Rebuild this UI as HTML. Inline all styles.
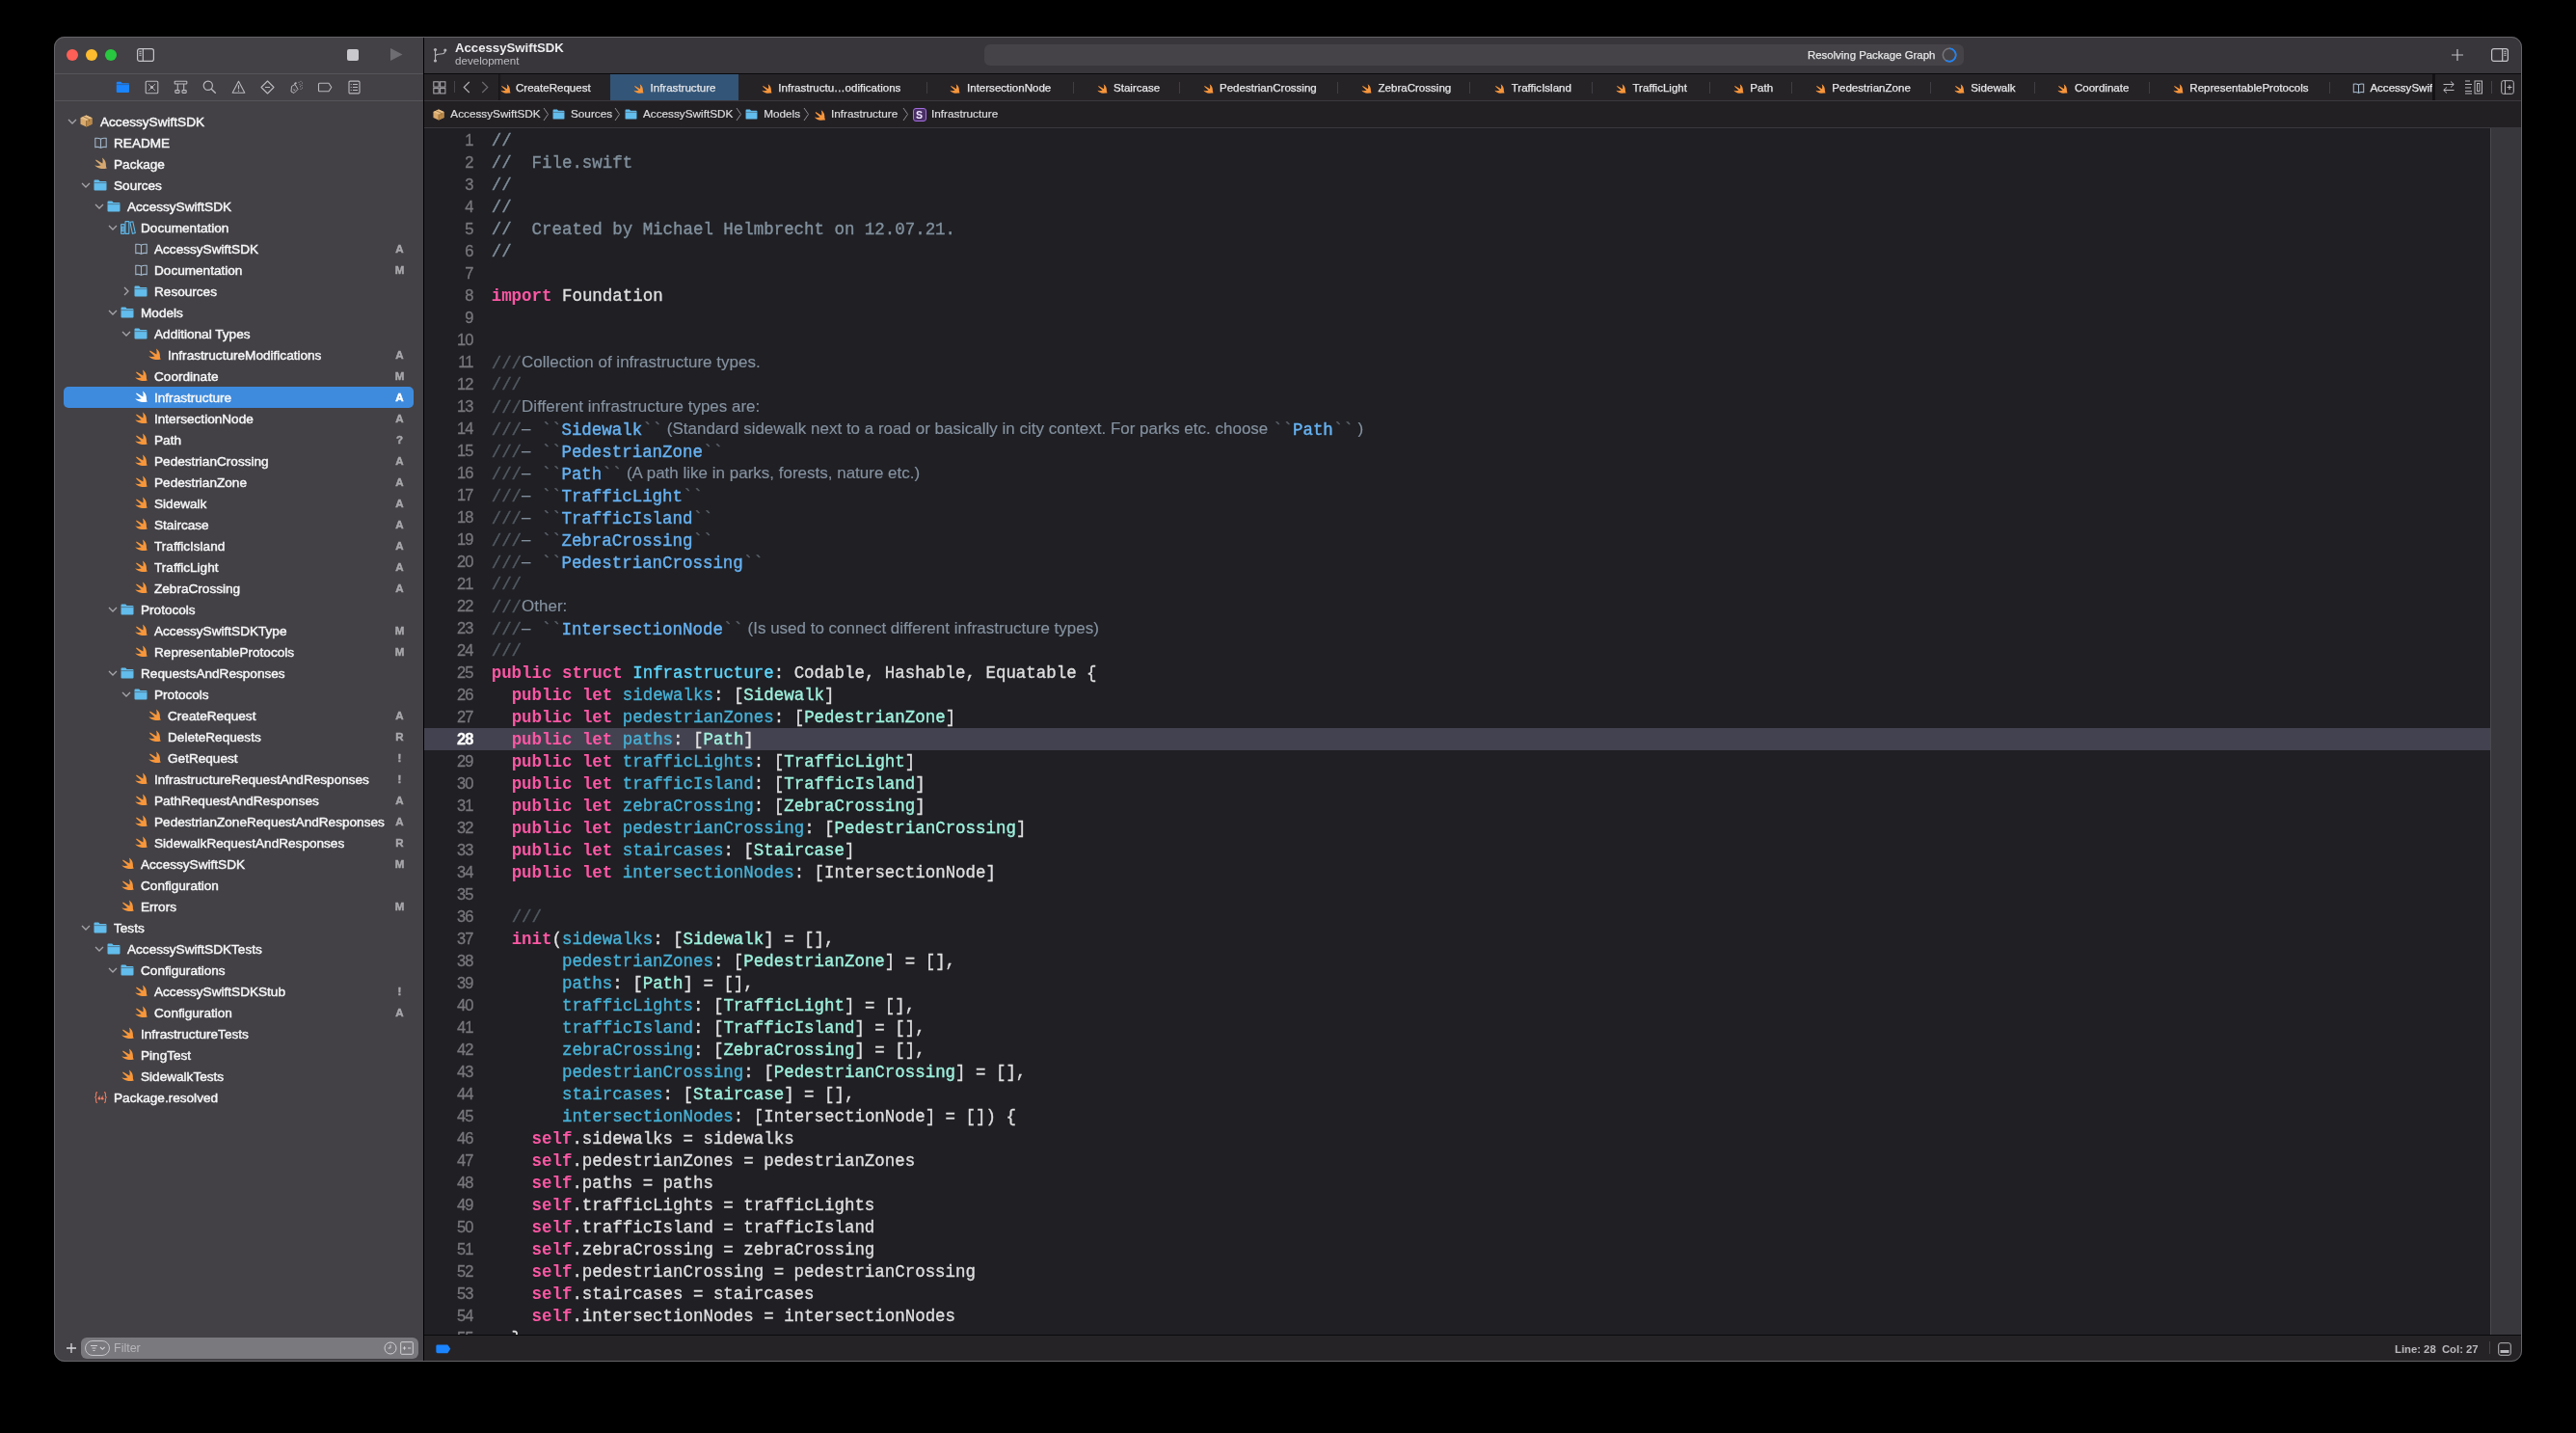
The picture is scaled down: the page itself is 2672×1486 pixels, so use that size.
<!DOCTYPE html>
<html><head><meta charset="utf-8"><style>
*{box-sizing:border-box;margin:0;padding:0}
html,body{width:2672px;height:1486px;overflow:hidden;background:#000}
body{position:relative;font-family:"Liberation Sans",sans-serif}
.a{position:absolute}
#win{position:absolute;left:56px;top:38px;width:2560px;height:1374px;border-radius:11px;overflow:hidden;background:#1f1f24;will-change:transform}
#winb{position:absolute;left:56px;top:38px;width:2560px;height:1374px;border-radius:11px;border:1px solid #656468;pointer-events:none}
#side{position:absolute;left:0;top:0;width:383px;height:1374px;background:#434145}
#sidebd{position:absolute;left:383px;top:0;width:1px;height:1374px;background:#000}
.sep{position:absolute;height:1px}
.row{position:absolute;left:0;width:383px;height:22px;color:#f6f6f8;font-size:13.6px;line-height:22px;white-space:nowrap;-webkit-text-stroke:0.45px}
.row .t{position:absolute;top:0.7px}
.row .bd{position:absolute;left:352.5px;top:0;width:12px;text-align:center;color:#a9a8ac;font-size:11.5px;font-weight:bold}
.row .ic{position:absolute;top:4px}
.row .ch{position:absolute;top:5px}
#code{position:absolute;left:0;top:0}
.ln{position:absolute;left:0px;width:50.5px;margin-top:-1px;text-align:right;font-family:"Liberation Sans",sans-serif;font-size:16.5px;letter-spacing:-0.9px;padding-right:0;color:#77777c;-webkit-text-stroke:0.3px;height:23px;line-height:23px}
.cl{position:absolute;left:69.7px;height:23px;line-height:23px;font-family:"Liberation Mono",monospace;font-size:17.455px;color:#dfdfe0;white-space:pre;-webkit-text-stroke:0.35px}
.lnc{color:#ffffff;font-weight:bold}
.k{color:#fc57a4;font-weight:bold;-webkit-text-stroke:0}
.dt{color:#5dd8ff}
.do{color:#46b1d6}
.pt{color:#9ef1dd}
.cm{color:#81909d}
.ds{color:#525a62}
.dx{font-family:"Liberation Sans",sans-serif;font-size:16.95px;color:#8592a0;-webkit-text-stroke:0.15px;position:relative;top:-1px;letter-spacing:0.025px}
.dc{color:#66b2f2;-webkit-text-stroke:0.4px}
.bt{color:#5a6168}
.tab{position:absolute;top:38px;height:28px;font-size:11.8px;line-height:28px;color:#dcdcde;white-space:nowrap}
.bc{position:absolute;top:66.3px;height:27px;font-size:11.75px;line-height:27px;color:#dcdcde;white-space:nowrap;-webkit-text-stroke:0.2px}
</style></head>
<body><div id="win"><div id="side"><div class="a" style="left:13px;top:12.5px;width:12px;height:12px;border-radius:50%;background:#fe5f57"></div><div class="a" style="left:33px;top:12.5px;width:12px;height:12px;border-radius:50%;background:#febc2e"></div><div class="a" style="left:53px;top:12.5px;width:12px;height:12px;border-radius:50%;background:#28c840"></div><svg class="a" style="left:85px;top:11px" width="20" height="16" viewBox="0 0 20 16"><rect x="1.6" y="1.6" width="16.8" height="12.8" rx="2.2" fill="none" stroke="#c4c3c7" stroke-width="1.2"/><line x1="7.3" y1="1.6" x2="7.3" y2="14.4" stroke="#c4c3c7" stroke-width="1.2"/><path d="M3.4 4.3H5.6M3.4 6.3H5.6M3.4 8.3H5.6" stroke="#c4c3c7" stroke-width="1"/></svg><div class="a" style="left:304px;top:13px;width:12px;height:12px;border-radius:2px;background:#c9c8cc"></div><svg class="a" style="left:348px;top:11px" width="14" height="15" viewBox="0 0 14 15"><path d="M1 1L13.5 7.5L1 14Z" fill="#6e6d71"/></svg></div><div class="sep a" style="left:0;top:38px;width:383px;background:#56555a"></div><div class="sep a" style="left:0;top:66px;width:383px;background:#56555a"></div><div id="sidebd"></div><div class="a" style="left:0;top:0"><svg class="a" style="left:64px;top:46px" width="15" height="13" viewBox="0 0 15 13"><path fill="#1a84ff" d="M1.8 0.8H5.3L6.8 2.2H13Q14 2.2 14 3.2V11Q14 12 13 12H1.8Q0.8 12 0.8 11V1.8Q0.8 0.8 1.8 0.8Z"/><rect x="0.8" y="3.3" width="13.2" height="0.8" fill="#434145" opacity="0.6"/></svg><svg class="a" style="left:94px;top:45px" width="15" height="15" viewBox="0 0 15 15"><rect x="1.2" y="1.2" width="12.6" height="12.6" rx="1" fill="none" stroke="#b9b8bc" stroke-width="1.1"/><path d="M4 4L11 11M11 4L4 11" stroke="#b9b8bc" stroke-width="0.8"/><circle cx="7.5" cy="7.5" r="1.5" fill="#b9b8bc"/></svg><svg class="a" style="left:124px;top:45px" width="15" height="15" viewBox="0 0 15 15"><rect x="1.2" y="1.2" width="12.6" height="2.8" rx=".6" fill="none" stroke="#b9b8bc" stroke-width="1.1"/><path d="M4.3 4V10.5M10.7 4V10.5" stroke="#b9b8bc" stroke-width="1.1"/><rect x="1.8" y="10.6" width="4.2" height="2.8" rx=".6" fill="none" stroke="#b9b8bc" stroke-width="1.1"/><rect x="9" y="10.6" width="4.2" height="2.8" rx=".6" fill="none" stroke="#b9b8bc" stroke-width="1.1"/></svg><svg class="a" style="left:154px;top:45px" width="15" height="15" viewBox="0 0 15 15"><circle cx="5.8" cy="5.8" r="4.6" fill="none" stroke="#b9b8bc" stroke-width="1.2"/><path d="M9.2 9.2L13.3 13.3" stroke="#b9b8bc" stroke-width="1.4" stroke-linecap="round"/></svg><svg class="a" style="left:184px;top:45px" width="15" height="15" viewBox="0 0 15 15"><path d="M7.5 1.3L13.8 13.2H1.2Z" fill="none" stroke="#b9b8bc" stroke-width="1.1" stroke-linejoin="round"/><path d="M7.5 5.3V9.6" stroke="#b9b8bc" stroke-width="1.2"/><circle cx="7.5" cy="11.3" r=".7" fill="#b9b8bc"/></svg><svg class="a" style="left:214px;top:45px" width="15" height="15" viewBox="0 0 15 15"><path d="M7.5 1L14 7.5L7.5 14L1 7.5Z" fill="none" stroke="#b9b8bc" stroke-width="1.1" stroke-linejoin="round"/><path d="M5 7.5H10" stroke="#b9b8bc" stroke-width="1.2"/></svg><svg class="a" style="left:244px;top:45px" width="16" height="15" viewBox="0 0 16 15"><path d="M2.5 6.5L6 4.5L9 9.5L5 13.5L2 12Z" fill="none" stroke="#b9b8bc" stroke-width="1"/><path d="M5.5 4L7.5 2.8" stroke="#b9b8bc" stroke-width="1.6"/><path d="M4.5 9.5L6 11M6 9.5L4.5 11" stroke="#b9b8bc" stroke-width=".7"/><circle cx="10" cy="2.2" r=".5" fill="#b9b8bc"/><circle cx="12" cy="1.3" r=".5" fill="#b9b8bc"/><circle cx="13.5" cy="3" r=".5" fill="#b9b8bc"/><circle cx="11" cy="4.2" r=".5" fill="#b9b8bc"/><circle cx="13" cy="5.5" r=".5" fill="#b9b8bc"/><circle cx="11.5" cy="6.8" r=".5" fill="#b9b8bc"/><circle cx="13.5" cy="8" r=".5" fill="#b9b8bc"/><circle cx="12" cy="9.3" r=".5" fill="#b9b8bc"/></svg><svg class="a" style="left:273px;top:45px" width="16" height="15" viewBox="0 0 16 15"><path d="M1.5 4.3Q1.5 3.3 2.5 3.3H12L14.8 7.5L12 11.7H2.5Q1.5 11.7 1.5 10.7Z" fill="none" stroke="#b9b8bc" stroke-width="1.1" stroke-linejoin="round"/></svg><svg class="a" style="left:305px;top:45px" width="13" height="15" viewBox="0 0 13 15"><rect x="1" y="1.1" width="11" height="12.8" rx="1.2" fill="none" stroke="#b9b8bc" stroke-width="1.1"/><path d="M5 4.5H10M5 7.5H10M5 10.5H10" stroke="#b9b8bc" stroke-width="1"/><circle cx="3.2" cy="4.5" r=".6" fill="#b9b8bc"/><circle cx="3.2" cy="7.5" r=".6" fill="#b9b8bc"/><circle cx="3.2" cy="10.5" r=".6" fill="#b9b8bc"/></svg></div><div class="row" style="top:77px"><svg class="a" style="left:13.600000000000001px;top:5.4px" width="10" height="12" viewBox="0 0 10 12"><path fill="none" stroke="#a5a4a8" stroke-width="1.3" d="M1 4L5 8L9 4"/></svg><svg class="a" style="left:27px;top:4px" width="13" height="13" viewBox="0 0 13 13"><path fill="#d9aa6c" d="M6.5 0.5L12.5 3.2V9.8L6.5 12.5L0.5 9.8V3.2Z"/><path fill="#b98848" d="M6.5 6L12.5 3.2V9.8L6.5 12.5Z"/><path fill="#e8c08a" d="M6.5 0.5L12.5 3.2L6.5 6L0.5 3.2Z"/><path stroke="#8d6634" stroke-width="0.8" fill="none" d="M3.5 1.9L9.5 4.6V7M6.5 6V12.5"/></svg><span class="t" style="left:48px">AccessySwiftSDK</span></div><div class="row" style="top:99px"><svg class="a" style="left:42px;top:5px" width="13" height="12" viewBox="0 0 13 12"><path fill="none" stroke="#9fb4c8" stroke-width="1.1" d="M6.5 2.2C5 1.2 2.8 1 0.8 1.4V10.6C2.8 10.2 5 10.4 6.5 11.4C8 10.4 10.2 10.2 12.2 10.6V1.4C10.2 1 8 1.2 6.5 2.2ZM6.5 2.2V11.4"/></svg><span class="t" style="left:62px">README</span></div><div class="row" style="top:121px"><svg class="a" style="left:41.8px;top:4.4px" width="13" height="12.5" viewBox="0 0 13.5 12.8"><path fill="#d5a870" d="M8.2 0.3C10.5 1.8 12.2 4.2 12.3 7.2C12.4 8.5 12.3 9.6 12.6 10.5L13.3 11.8C12.5 11.9 11.8 12.2 11 12.3L7.5 12.4C4.5 12.3 2 10.8 0.2 8.6C2 9.3 4.5 9.4 6.8 8.7L1.2 3.6L1.7 2.4L8.6 6.6C9.2 4.8 9 2.5 8.2 0.3Z"/></svg><span class="t" style="left:62px">Package</span></div><div class="row" style="top:143px"><svg class="a" style="left:27.6px;top:5.4px" width="10" height="12" viewBox="0 0 10 12"><path fill="none" stroke="#a5a4a8" stroke-width="1.3" d="M1 4L5 8L9 4"/></svg><svg class="a" style="left:41px;top:5px" width="14" height="12" viewBox="0 0 14 12"><path fill="#62bcec" d="M1.5 0.5H5.2L6.6 2H12.5Q13.5 2 13.5 3V10.5Q13.5 11.5 12.5 11.5H1.5Q0.5 11.5 0.5 10.5V1.5Q0.5 0.5 1.5 0.5Z"/><rect x="0.5" y="3.2" width="13" height="0.9" fill="#434145" opacity="0.55"/></svg><span class="t" style="left:62px">Sources</span></div><div class="row" style="top:165px"><svg class="a" style="left:41.6px;top:5.4px" width="10" height="12" viewBox="0 0 10 12"><path fill="none" stroke="#a5a4a8" stroke-width="1.3" d="M1 4L5 8L9 4"/></svg><svg class="a" style="left:55px;top:5px" width="14" height="12" viewBox="0 0 14 12"><path fill="#62bcec" d="M1.5 0.5H5.2L6.6 2H12.5Q13.5 2 13.5 3V10.5Q13.5 11.5 12.5 11.5H1.5Q0.5 11.5 0.5 10.5V1.5Q0.5 0.5 1.5 0.5Z"/><rect x="0.5" y="3.2" width="13" height="0.9" fill="#434145" opacity="0.55"/></svg><span class="t" style="left:76px">AccessySwiftSDK</span></div><div class="row" style="top:187px"><svg class="a" style="left:55.6px;top:5.4px" width="10" height="12" viewBox="0 0 10 12"><path fill="none" stroke="#a5a4a8" stroke-width="1.3" d="M1 4L5 8L9 4"/></svg><svg class="a" style="left:68.7px;top:4.2px" width="16" height="14" viewBox="0 0 16 14"><g fill="none" stroke="#5fb6e6" stroke-width="1.1"><rect x="0.6" y="3.6" width="3.6" height="9.8" rx="0.4"/><rect x="1.7" y="6.2" width="1.4" height="4.5"/><rect x="5" y="0.6" width="3.8" height="12.8" rx="0.4"/><path d="M9.9 1.4L12.8 0.8L15.3 12.6L12.4 13.3Z"/></g></svg><span class="t" style="left:90px">Documentation</span></div><div class="row" style="top:209px"><svg class="a" style="left:84px;top:5px" width="13" height="12" viewBox="0 0 13 12"><path fill="none" stroke="#9fb4c8" stroke-width="1.1" d="M6.5 2.2C5 1.2 2.8 1 0.8 1.4V10.6C2.8 10.2 5 10.4 6.5 11.4C8 10.4 10.2 10.2 12.2 10.6V1.4C10.2 1 8 1.2 6.5 2.2ZM6.5 2.2V11.4"/></svg><span class="t" style="left:104px">AccessySwiftSDK</span><span class="bd">A</span></div><div class="row" style="top:231px"><svg class="a" style="left:84px;top:5px" width="13" height="12" viewBox="0 0 13 12"><path fill="none" stroke="#9fb4c8" stroke-width="1.1" d="M6.5 2.2C5 1.2 2.8 1 0.8 1.4V10.6C2.8 10.2 5 10.4 6.5 11.4C8 10.4 10.2 10.2 12.2 10.6V1.4C10.2 1 8 1.2 6.5 2.2ZM6.5 2.2V11.4"/></svg><span class="t" style="left:104px">Documentation</span><span class="bd">M</span></div><div class="row" style="top:253px"><svg class="a" style="left:69.6px;top:5.4px" width="10" height="12" viewBox="0 0 10 12"><path fill="none" stroke="#a5a4a8" stroke-width="1.3" d="M3 2L7 6L3 10"/></svg><svg class="a" style="left:83px;top:5px" width="14" height="12" viewBox="0 0 14 12"><path fill="#62bcec" d="M1.5 0.5H5.2L6.6 2H12.5Q13.5 2 13.5 3V10.5Q13.5 11.5 12.5 11.5H1.5Q0.5 11.5 0.5 10.5V1.5Q0.5 0.5 1.5 0.5Z"/><rect x="0.5" y="3.2" width="13" height="0.9" fill="#434145" opacity="0.55"/></svg><span class="t" style="left:104px">Resources</span></div><div class="row" style="top:275px"><svg class="a" style="left:55.6px;top:5.4px" width="10" height="12" viewBox="0 0 10 12"><path fill="none" stroke="#a5a4a8" stroke-width="1.3" d="M1 4L5 8L9 4"/></svg><svg class="a" style="left:69px;top:5px" width="14" height="12" viewBox="0 0 14 12"><path fill="#62bcec" d="M1.5 0.5H5.2L6.6 2H12.5Q13.5 2 13.5 3V10.5Q13.5 11.5 12.5 11.5H1.5Q0.5 11.5 0.5 10.5V1.5Q0.5 0.5 1.5 0.5Z"/><rect x="0.5" y="3.2" width="13" height="0.9" fill="#434145" opacity="0.55"/></svg><span class="t" style="left:90px">Models</span></div><div class="row" style="top:297px"><svg class="a" style="left:69.6px;top:5.4px" width="10" height="12" viewBox="0 0 10 12"><path fill="none" stroke="#a5a4a8" stroke-width="1.3" d="M1 4L5 8L9 4"/></svg><svg class="a" style="left:83px;top:5px" width="14" height="12" viewBox="0 0 14 12"><path fill="#62bcec" d="M1.5 0.5H5.2L6.6 2H12.5Q13.5 2 13.5 3V10.5Q13.5 11.5 12.5 11.5H1.5Q0.5 11.5 0.5 10.5V1.5Q0.5 0.5 1.5 0.5Z"/><rect x="0.5" y="3.2" width="13" height="0.9" fill="#434145" opacity="0.55"/></svg><span class="t" style="left:104px">Additional Types</span></div><div class="row" style="top:319px"><svg class="a" style="left:97.8px;top:4.4px" width="13" height="12.5" viewBox="0 0 13.5 12.8"><path fill="#f7963b" d="M8.2 0.3C10.5 1.8 12.2 4.2 12.3 7.2C12.4 8.5 12.3 9.6 12.6 10.5L13.3 11.8C12.5 11.9 11.8 12.2 11 12.3L7.5 12.4C4.5 12.3 2 10.8 0.2 8.6C2 9.3 4.5 9.4 6.8 8.7L1.2 3.6L1.7 2.4L8.6 6.6C9.2 4.8 9 2.5 8.2 0.3Z"/></svg><span class="t" style="left:118px">InfrastructureModifications</span><span class="bd">A</span></div><div class="row" style="top:341px"><svg class="a" style="left:83.8px;top:4.4px" width="13" height="12.5" viewBox="0 0 13.5 12.8"><path fill="#f7963b" d="M8.2 0.3C10.5 1.8 12.2 4.2 12.3 7.2C12.4 8.5 12.3 9.6 12.6 10.5L13.3 11.8C12.5 11.9 11.8 12.2 11 12.3L7.5 12.4C4.5 12.3 2 10.8 0.2 8.6C2 9.3 4.5 9.4 6.8 8.7L1.2 3.6L1.7 2.4L8.6 6.6C9.2 4.8 9 2.5 8.2 0.3Z"/></svg><span class="t" style="left:104px">Coordinate</span><span class="bd">M</span></div><div class="a" style="left:10px;top:363px;width:363px;height:22px;border-radius:5px;background:#3e8bde"></div><div class="row" style="top:363px"><svg class="a" style="left:83.8px;top:4.4px" width="13" height="12.5" viewBox="0 0 13.5 12.8"><path fill="#ffffff" d="M8.2 0.3C10.5 1.8 12.2 4.2 12.3 7.2C12.4 8.5 12.3 9.6 12.6 10.5L13.3 11.8C12.5 11.9 11.8 12.2 11 12.3L7.5 12.4C4.5 12.3 2 10.8 0.2 8.6C2 9.3 4.5 9.4 6.8 8.7L1.2 3.6L1.7 2.4L8.6 6.6C9.2 4.8 9 2.5 8.2 0.3Z"/></svg><span class="t" style="left:104px">Infrastructure</span><span class="bd" style=color:#fff>A</span></div><div class="row" style="top:385px"><svg class="a" style="left:83.8px;top:4.4px" width="13" height="12.5" viewBox="0 0 13.5 12.8"><path fill="#f7963b" d="M8.2 0.3C10.5 1.8 12.2 4.2 12.3 7.2C12.4 8.5 12.3 9.6 12.6 10.5L13.3 11.8C12.5 11.9 11.8 12.2 11 12.3L7.5 12.4C4.5 12.3 2 10.8 0.2 8.6C2 9.3 4.5 9.4 6.8 8.7L1.2 3.6L1.7 2.4L8.6 6.6C9.2 4.8 9 2.5 8.2 0.3Z"/></svg><span class="t" style="left:104px">IntersectionNode</span><span class="bd">A</span></div><div class="row" style="top:407px"><svg class="a" style="left:83.8px;top:4.4px" width="13" height="12.5" viewBox="0 0 13.5 12.8"><path fill="#f7963b" d="M8.2 0.3C10.5 1.8 12.2 4.2 12.3 7.2C12.4 8.5 12.3 9.6 12.6 10.5L13.3 11.8C12.5 11.9 11.8 12.2 11 12.3L7.5 12.4C4.5 12.3 2 10.8 0.2 8.6C2 9.3 4.5 9.4 6.8 8.7L1.2 3.6L1.7 2.4L8.6 6.6C9.2 4.8 9 2.5 8.2 0.3Z"/></svg><span class="t" style="left:104px">Path</span><span class="bd">?</span></div><div class="row" style="top:429px"><svg class="a" style="left:83.8px;top:4.4px" width="13" height="12.5" viewBox="0 0 13.5 12.8"><path fill="#f7963b" d="M8.2 0.3C10.5 1.8 12.2 4.2 12.3 7.2C12.4 8.5 12.3 9.6 12.6 10.5L13.3 11.8C12.5 11.9 11.8 12.2 11 12.3L7.5 12.4C4.5 12.3 2 10.8 0.2 8.6C2 9.3 4.5 9.4 6.8 8.7L1.2 3.6L1.7 2.4L8.6 6.6C9.2 4.8 9 2.5 8.2 0.3Z"/></svg><span class="t" style="left:104px">PedestrianCrossing</span><span class="bd">A</span></div><div class="row" style="top:451px"><svg class="a" style="left:83.8px;top:4.4px" width="13" height="12.5" viewBox="0 0 13.5 12.8"><path fill="#f7963b" d="M8.2 0.3C10.5 1.8 12.2 4.2 12.3 7.2C12.4 8.5 12.3 9.6 12.6 10.5L13.3 11.8C12.5 11.9 11.8 12.2 11 12.3L7.5 12.4C4.5 12.3 2 10.8 0.2 8.6C2 9.3 4.5 9.4 6.8 8.7L1.2 3.6L1.7 2.4L8.6 6.6C9.2 4.8 9 2.5 8.2 0.3Z"/></svg><span class="t" style="left:104px">PedestrianZone</span><span class="bd">A</span></div><div class="row" style="top:473px"><svg class="a" style="left:83.8px;top:4.4px" width="13" height="12.5" viewBox="0 0 13.5 12.8"><path fill="#f7963b" d="M8.2 0.3C10.5 1.8 12.2 4.2 12.3 7.2C12.4 8.5 12.3 9.6 12.6 10.5L13.3 11.8C12.5 11.9 11.8 12.2 11 12.3L7.5 12.4C4.5 12.3 2 10.8 0.2 8.6C2 9.3 4.5 9.4 6.8 8.7L1.2 3.6L1.7 2.4L8.6 6.6C9.2 4.8 9 2.5 8.2 0.3Z"/></svg><span class="t" style="left:104px">Sidewalk</span><span class="bd">A</span></div><div class="row" style="top:495px"><svg class="a" style="left:83.8px;top:4.4px" width="13" height="12.5" viewBox="0 0 13.5 12.8"><path fill="#f7963b" d="M8.2 0.3C10.5 1.8 12.2 4.2 12.3 7.2C12.4 8.5 12.3 9.6 12.6 10.5L13.3 11.8C12.5 11.9 11.8 12.2 11 12.3L7.5 12.4C4.5 12.3 2 10.8 0.2 8.6C2 9.3 4.5 9.4 6.8 8.7L1.2 3.6L1.7 2.4L8.6 6.6C9.2 4.8 9 2.5 8.2 0.3Z"/></svg><span class="t" style="left:104px">Staircase</span><span class="bd">A</span></div><div class="row" style="top:517px"><svg class="a" style="left:83.8px;top:4.4px" width="13" height="12.5" viewBox="0 0 13.5 12.8"><path fill="#f7963b" d="M8.2 0.3C10.5 1.8 12.2 4.2 12.3 7.2C12.4 8.5 12.3 9.6 12.6 10.5L13.3 11.8C12.5 11.9 11.8 12.2 11 12.3L7.5 12.4C4.5 12.3 2 10.8 0.2 8.6C2 9.3 4.5 9.4 6.8 8.7L1.2 3.6L1.7 2.4L8.6 6.6C9.2 4.8 9 2.5 8.2 0.3Z"/></svg><span class="t" style="left:104px">TrafficIsland</span><span class="bd">A</span></div><div class="row" style="top:539px"><svg class="a" style="left:83.8px;top:4.4px" width="13" height="12.5" viewBox="0 0 13.5 12.8"><path fill="#f7963b" d="M8.2 0.3C10.5 1.8 12.2 4.2 12.3 7.2C12.4 8.5 12.3 9.6 12.6 10.5L13.3 11.8C12.5 11.9 11.8 12.2 11 12.3L7.5 12.4C4.5 12.3 2 10.8 0.2 8.6C2 9.3 4.5 9.4 6.8 8.7L1.2 3.6L1.7 2.4L8.6 6.6C9.2 4.8 9 2.5 8.2 0.3Z"/></svg><span class="t" style="left:104px">TrafficLight</span><span class="bd">A</span></div><div class="row" style="top:561px"><svg class="a" style="left:83.8px;top:4.4px" width="13" height="12.5" viewBox="0 0 13.5 12.8"><path fill="#f7963b" d="M8.2 0.3C10.5 1.8 12.2 4.2 12.3 7.2C12.4 8.5 12.3 9.6 12.6 10.5L13.3 11.8C12.5 11.9 11.8 12.2 11 12.3L7.5 12.4C4.5 12.3 2 10.8 0.2 8.6C2 9.3 4.5 9.4 6.8 8.7L1.2 3.6L1.7 2.4L8.6 6.6C9.2 4.8 9 2.5 8.2 0.3Z"/></svg><span class="t" style="left:104px">ZebraCrossing</span><span class="bd">A</span></div><div class="row" style="top:583px"><svg class="a" style="left:55.6px;top:5.4px" width="10" height="12" viewBox="0 0 10 12"><path fill="none" stroke="#a5a4a8" stroke-width="1.3" d="M1 4L5 8L9 4"/></svg><svg class="a" style="left:69px;top:5px" width="14" height="12" viewBox="0 0 14 12"><path fill="#62bcec" d="M1.5 0.5H5.2L6.6 2H12.5Q13.5 2 13.5 3V10.5Q13.5 11.5 12.5 11.5H1.5Q0.5 11.5 0.5 10.5V1.5Q0.5 0.5 1.5 0.5Z"/><rect x="0.5" y="3.2" width="13" height="0.9" fill="#434145" opacity="0.55"/></svg><span class="t" style="left:90px">Protocols</span></div><div class="row" style="top:605px"><svg class="a" style="left:83.8px;top:4.4px" width="13" height="12.5" viewBox="0 0 13.5 12.8"><path fill="#f7963b" d="M8.2 0.3C10.5 1.8 12.2 4.2 12.3 7.2C12.4 8.5 12.3 9.6 12.6 10.5L13.3 11.8C12.5 11.9 11.8 12.2 11 12.3L7.5 12.4C4.5 12.3 2 10.8 0.2 8.6C2 9.3 4.5 9.4 6.8 8.7L1.2 3.6L1.7 2.4L8.6 6.6C9.2 4.8 9 2.5 8.2 0.3Z"/></svg><span class="t" style="left:104px">AccessySwiftSDKType</span><span class="bd">M</span></div><div class="row" style="top:627px"><svg class="a" style="left:83.8px;top:4.4px" width="13" height="12.5" viewBox="0 0 13.5 12.8"><path fill="#f7963b" d="M8.2 0.3C10.5 1.8 12.2 4.2 12.3 7.2C12.4 8.5 12.3 9.6 12.6 10.5L13.3 11.8C12.5 11.9 11.8 12.2 11 12.3L7.5 12.4C4.5 12.3 2 10.8 0.2 8.6C2 9.3 4.5 9.4 6.8 8.7L1.2 3.6L1.7 2.4L8.6 6.6C9.2 4.8 9 2.5 8.2 0.3Z"/></svg><span class="t" style="left:104px">RepresentableProtocols</span><span class="bd">M</span></div><div class="row" style="top:649px"><svg class="a" style="left:55.6px;top:5.4px" width="10" height="12" viewBox="0 0 10 12"><path fill="none" stroke="#a5a4a8" stroke-width="1.3" d="M1 4L5 8L9 4"/></svg><svg class="a" style="left:69px;top:5px" width="14" height="12" viewBox="0 0 14 12"><path fill="#62bcec" d="M1.5 0.5H5.2L6.6 2H12.5Q13.5 2 13.5 3V10.5Q13.5 11.5 12.5 11.5H1.5Q0.5 11.5 0.5 10.5V1.5Q0.5 0.5 1.5 0.5Z"/><rect x="0.5" y="3.2" width="13" height="0.9" fill="#434145" opacity="0.55"/></svg><span class="t" style="left:90px">RequestsAndResponses</span></div><div class="row" style="top:671px"><svg class="a" style="left:69.6px;top:5.4px" width="10" height="12" viewBox="0 0 10 12"><path fill="none" stroke="#a5a4a8" stroke-width="1.3" d="M1 4L5 8L9 4"/></svg><svg class="a" style="left:83px;top:5px" width="14" height="12" viewBox="0 0 14 12"><path fill="#62bcec" d="M1.5 0.5H5.2L6.6 2H12.5Q13.5 2 13.5 3V10.5Q13.5 11.5 12.5 11.5H1.5Q0.5 11.5 0.5 10.5V1.5Q0.5 0.5 1.5 0.5Z"/><rect x="0.5" y="3.2" width="13" height="0.9" fill="#434145" opacity="0.55"/></svg><span class="t" style="left:104px">Protocols</span></div><div class="row" style="top:693px"><svg class="a" style="left:97.8px;top:4.4px" width="13" height="12.5" viewBox="0 0 13.5 12.8"><path fill="#f7963b" d="M8.2 0.3C10.5 1.8 12.2 4.2 12.3 7.2C12.4 8.5 12.3 9.6 12.6 10.5L13.3 11.8C12.5 11.9 11.8 12.2 11 12.3L7.5 12.4C4.5 12.3 2 10.8 0.2 8.6C2 9.3 4.5 9.4 6.8 8.7L1.2 3.6L1.7 2.4L8.6 6.6C9.2 4.8 9 2.5 8.2 0.3Z"/></svg><span class="t" style="left:118px">CreateRequest</span><span class="bd">A</span></div><div class="row" style="top:715px"><svg class="a" style="left:97.8px;top:4.4px" width="13" height="12.5" viewBox="0 0 13.5 12.8"><path fill="#f7963b" d="M8.2 0.3C10.5 1.8 12.2 4.2 12.3 7.2C12.4 8.5 12.3 9.6 12.6 10.5L13.3 11.8C12.5 11.9 11.8 12.2 11 12.3L7.5 12.4C4.5 12.3 2 10.8 0.2 8.6C2 9.3 4.5 9.4 6.8 8.7L1.2 3.6L1.7 2.4L8.6 6.6C9.2 4.8 9 2.5 8.2 0.3Z"/></svg><span class="t" style="left:118px">DeleteRequests</span><span class="bd">R</span></div><div class="row" style="top:737px"><svg class="a" style="left:97.8px;top:4.4px" width="13" height="12.5" viewBox="0 0 13.5 12.8"><path fill="#f7963b" d="M8.2 0.3C10.5 1.8 12.2 4.2 12.3 7.2C12.4 8.5 12.3 9.6 12.6 10.5L13.3 11.8C12.5 11.9 11.8 12.2 11 12.3L7.5 12.4C4.5 12.3 2 10.8 0.2 8.6C2 9.3 4.5 9.4 6.8 8.7L1.2 3.6L1.7 2.4L8.6 6.6C9.2 4.8 9 2.5 8.2 0.3Z"/></svg><span class="t" style="left:118px">GetRequest</span><span class="bd">!</span></div><div class="row" style="top:759px"><svg class="a" style="left:83.8px;top:4.4px" width="13" height="12.5" viewBox="0 0 13.5 12.8"><path fill="#f7963b" d="M8.2 0.3C10.5 1.8 12.2 4.2 12.3 7.2C12.4 8.5 12.3 9.6 12.6 10.5L13.3 11.8C12.5 11.9 11.8 12.2 11 12.3L7.5 12.4C4.5 12.3 2 10.8 0.2 8.6C2 9.3 4.5 9.4 6.8 8.7L1.2 3.6L1.7 2.4L8.6 6.6C9.2 4.8 9 2.5 8.2 0.3Z"/></svg><span class="t" style="left:104px">InfrastructureRequestAndResponses</span><span class="bd">!</span></div><div class="row" style="top:781px"><svg class="a" style="left:83.8px;top:4.4px" width="13" height="12.5" viewBox="0 0 13.5 12.8"><path fill="#f7963b" d="M8.2 0.3C10.5 1.8 12.2 4.2 12.3 7.2C12.4 8.5 12.3 9.6 12.6 10.5L13.3 11.8C12.5 11.9 11.8 12.2 11 12.3L7.5 12.4C4.5 12.3 2 10.8 0.2 8.6C2 9.3 4.5 9.4 6.8 8.7L1.2 3.6L1.7 2.4L8.6 6.6C9.2 4.8 9 2.5 8.2 0.3Z"/></svg><span class="t" style="left:104px">PathRequestAndResponses</span><span class="bd">A</span></div><div class="row" style="top:803px"><svg class="a" style="left:83.8px;top:4.4px" width="13" height="12.5" viewBox="0 0 13.5 12.8"><path fill="#f7963b" d="M8.2 0.3C10.5 1.8 12.2 4.2 12.3 7.2C12.4 8.5 12.3 9.6 12.6 10.5L13.3 11.8C12.5 11.9 11.8 12.2 11 12.3L7.5 12.4C4.5 12.3 2 10.8 0.2 8.6C2 9.3 4.5 9.4 6.8 8.7L1.2 3.6L1.7 2.4L8.6 6.6C9.2 4.8 9 2.5 8.2 0.3Z"/></svg><span class="t" style="left:104px">PedestrianZoneRequestAndResponses</span><span class="bd">A</span></div><div class="row" style="top:825px"><svg class="a" style="left:83.8px;top:4.4px" width="13" height="12.5" viewBox="0 0 13.5 12.8"><path fill="#f7963b" d="M8.2 0.3C10.5 1.8 12.2 4.2 12.3 7.2C12.4 8.5 12.3 9.6 12.6 10.5L13.3 11.8C12.5 11.9 11.8 12.2 11 12.3L7.5 12.4C4.5 12.3 2 10.8 0.2 8.6C2 9.3 4.5 9.4 6.8 8.7L1.2 3.6L1.7 2.4L8.6 6.6C9.2 4.8 9 2.5 8.2 0.3Z"/></svg><span class="t" style="left:104px">SidewalkRequestAndResponses</span><span class="bd">R</span></div><div class="row" style="top:847px"><svg class="a" style="left:69.8px;top:4.4px" width="13" height="12.5" viewBox="0 0 13.5 12.8"><path fill="#f7963b" d="M8.2 0.3C10.5 1.8 12.2 4.2 12.3 7.2C12.4 8.5 12.3 9.6 12.6 10.5L13.3 11.8C12.5 11.9 11.8 12.2 11 12.3L7.5 12.4C4.5 12.3 2 10.8 0.2 8.6C2 9.3 4.5 9.4 6.8 8.7L1.2 3.6L1.7 2.4L8.6 6.6C9.2 4.8 9 2.5 8.2 0.3Z"/></svg><span class="t" style="left:90px">AccessySwiftSDK</span><span class="bd">M</span></div><div class="row" style="top:869px"><svg class="a" style="left:69.8px;top:4.4px" width="13" height="12.5" viewBox="0 0 13.5 12.8"><path fill="#f7963b" d="M8.2 0.3C10.5 1.8 12.2 4.2 12.3 7.2C12.4 8.5 12.3 9.6 12.6 10.5L13.3 11.8C12.5 11.9 11.8 12.2 11 12.3L7.5 12.4C4.5 12.3 2 10.8 0.2 8.6C2 9.3 4.5 9.4 6.8 8.7L1.2 3.6L1.7 2.4L8.6 6.6C9.2 4.8 9 2.5 8.2 0.3Z"/></svg><span class="t" style="left:90px">Configuration</span></div><div class="row" style="top:891px"><svg class="a" style="left:69.8px;top:4.4px" width="13" height="12.5" viewBox="0 0 13.5 12.8"><path fill="#f7963b" d="M8.2 0.3C10.5 1.8 12.2 4.2 12.3 7.2C12.4 8.5 12.3 9.6 12.6 10.5L13.3 11.8C12.5 11.9 11.8 12.2 11 12.3L7.5 12.4C4.5 12.3 2 10.8 0.2 8.6C2 9.3 4.5 9.4 6.8 8.7L1.2 3.6L1.7 2.4L8.6 6.6C9.2 4.8 9 2.5 8.2 0.3Z"/></svg><span class="t" style="left:90px">Errors</span><span class="bd">M</span></div><div class="row" style="top:913px"><svg class="a" style="left:27.6px;top:5.4px" width="10" height="12" viewBox="0 0 10 12"><path fill="none" stroke="#a5a4a8" stroke-width="1.3" d="M1 4L5 8L9 4"/></svg><svg class="a" style="left:41px;top:5px" width="14" height="12" viewBox="0 0 14 12"><path fill="#62bcec" d="M1.5 0.5H5.2L6.6 2H12.5Q13.5 2 13.5 3V10.5Q13.5 11.5 12.5 11.5H1.5Q0.5 11.5 0.5 10.5V1.5Q0.5 0.5 1.5 0.5Z"/><rect x="0.5" y="3.2" width="13" height="0.9" fill="#434145" opacity="0.55"/></svg><span class="t" style="left:62px">Tests</span></div><div class="row" style="top:935px"><svg class="a" style="left:41.6px;top:5.4px" width="10" height="12" viewBox="0 0 10 12"><path fill="none" stroke="#a5a4a8" stroke-width="1.3" d="M1 4L5 8L9 4"/></svg><svg class="a" style="left:55px;top:5px" width="14" height="12" viewBox="0 0 14 12"><path fill="#62bcec" d="M1.5 0.5H5.2L6.6 2H12.5Q13.5 2 13.5 3V10.5Q13.5 11.5 12.5 11.5H1.5Q0.5 11.5 0.5 10.5V1.5Q0.5 0.5 1.5 0.5Z"/><rect x="0.5" y="3.2" width="13" height="0.9" fill="#434145" opacity="0.55"/></svg><span class="t" style="left:76px">AccessySwiftSDKTests</span></div><div class="row" style="top:957px"><svg class="a" style="left:55.6px;top:5.4px" width="10" height="12" viewBox="0 0 10 12"><path fill="none" stroke="#a5a4a8" stroke-width="1.3" d="M1 4L5 8L9 4"/></svg><svg class="a" style="left:69px;top:5px" width="14" height="12" viewBox="0 0 14 12"><path fill="#62bcec" d="M1.5 0.5H5.2L6.6 2H12.5Q13.5 2 13.5 3V10.5Q13.5 11.5 12.5 11.5H1.5Q0.5 11.5 0.5 10.5V1.5Q0.5 0.5 1.5 0.5Z"/><rect x="0.5" y="3.2" width="13" height="0.9" fill="#434145" opacity="0.55"/></svg><span class="t" style="left:90px">Configurations</span></div><div class="row" style="top:979px"><svg class="a" style="left:83.8px;top:4.4px" width="13" height="12.5" viewBox="0 0 13.5 12.8"><path fill="#f7963b" d="M8.2 0.3C10.5 1.8 12.2 4.2 12.3 7.2C12.4 8.5 12.3 9.6 12.6 10.5L13.3 11.8C12.5 11.9 11.8 12.2 11 12.3L7.5 12.4C4.5 12.3 2 10.8 0.2 8.6C2 9.3 4.5 9.4 6.8 8.7L1.2 3.6L1.7 2.4L8.6 6.6C9.2 4.8 9 2.5 8.2 0.3Z"/></svg><span class="t" style="left:104px">AccessySwiftSDKStub</span><span class="bd">!</span></div><div class="row" style="top:1001px"><svg class="a" style="left:83.8px;top:4.4px" width="13" height="12.5" viewBox="0 0 13.5 12.8"><path fill="#f7963b" d="M8.2 0.3C10.5 1.8 12.2 4.2 12.3 7.2C12.4 8.5 12.3 9.6 12.6 10.5L13.3 11.8C12.5 11.9 11.8 12.2 11 12.3L7.5 12.4C4.5 12.3 2 10.8 0.2 8.6C2 9.3 4.5 9.4 6.8 8.7L1.2 3.6L1.7 2.4L8.6 6.6C9.2 4.8 9 2.5 8.2 0.3Z"/></svg><span class="t" style="left:104px">Configuration</span><span class="bd">A</span></div><div class="row" style="top:1023px"><svg class="a" style="left:69.8px;top:4.4px" width="13" height="12.5" viewBox="0 0 13.5 12.8"><path fill="#f7963b" d="M8.2 0.3C10.5 1.8 12.2 4.2 12.3 7.2C12.4 8.5 12.3 9.6 12.6 10.5L13.3 11.8C12.5 11.9 11.8 12.2 11 12.3L7.5 12.4C4.5 12.3 2 10.8 0.2 8.6C2 9.3 4.5 9.4 6.8 8.7L1.2 3.6L1.7 2.4L8.6 6.6C9.2 4.8 9 2.5 8.2 0.3Z"/></svg><span class="t" style="left:90px">InfrastructureTests</span></div><div class="row" style="top:1045px"><svg class="a" style="left:69.8px;top:4.4px" width="13" height="12.5" viewBox="0 0 13.5 12.8"><path fill="#f7963b" d="M8.2 0.3C10.5 1.8 12.2 4.2 12.3 7.2C12.4 8.5 12.3 9.6 12.6 10.5L13.3 11.8C12.5 11.9 11.8 12.2 11 12.3L7.5 12.4C4.5 12.3 2 10.8 0.2 8.6C2 9.3 4.5 9.4 6.8 8.7L1.2 3.6L1.7 2.4L8.6 6.6C9.2 4.8 9 2.5 8.2 0.3Z"/></svg><span class="t" style="left:90px">PingTest</span></div><div class="row" style="top:1067px"><svg class="a" style="left:69.8px;top:4.4px" width="13" height="12.5" viewBox="0 0 13.5 12.8"><path fill="#f7963b" d="M8.2 0.3C10.5 1.8 12.2 4.2 12.3 7.2C12.4 8.5 12.3 9.6 12.6 10.5L13.3 11.8C12.5 11.9 11.8 12.2 11 12.3L7.5 12.4C4.5 12.3 2 10.8 0.2 8.6C2 9.3 4.5 9.4 6.8 8.7L1.2 3.6L1.7 2.4L8.6 6.6C9.2 4.8 9 2.5 8.2 0.3Z"/></svg><span class="t" style="left:90px">SidewalkTests</span></div><div class="row" style="top:1089px"><svg class="a" style="left:41px;top:5px" width="15" height="12" viewBox="0 0 15 12"><path fill="none" stroke="#ee7a62" stroke-width="1.1" d="M4 0.6Q2.6 0.6 2.6 2V4.6Q2.6 6 1.1 6Q2.6 6 2.6 7.4V10Q2.6 11.4 4 11.4M11 0.6Q12.4 0.6 12.4 2V4.6Q12.4 6 13.9 6Q12.4 6 12.4 7.4V10Q12.4 11.4 11 11.4"/><circle cx="6" cy="7.2" r="1.3" fill="#f47d64"/><circle cx="9.2" cy="7.2" r="1.3" fill="#f47d64"/><path d="M5 6.8Q5.5 5 7 4.6M8.2 6.8Q8.7 5 10.2 4.6" fill="none" stroke="#f47d64" stroke-width="0.9"/></svg><span class="t" style="left:62px">Package.resolved</span></div><div class="a" style="left:10.5px;top:1353px;width:14px;height:14px"><svg width="14" height="14" viewBox="0 0 14 14"><path d="M7 2V12M2 7H12" stroke="#d8d7db" stroke-width="1.3"/></svg></div><div class="a" style="left:28px;top:1349px;width:350px;height:22px;border-radius:6px;background:#7a797d"></div><div class="a" style="left:32px;top:1352px;width:26px;height:16px;border-radius:8px;border:1px solid #c4c3c7"></div><svg class="a" style="left:36px;top:1354px" width="20" height="12" viewBox="0 0 20 12"><path d="M2 3.5H9M3.5 6H7.5M4.5 8.5H6.5" stroke="#d0cfd3" stroke-width="1"/><path d="M12 5L14.3 7.3L16.6 5" fill="none" stroke="#d0cfd3" stroke-width="1.1"/></svg><div class="a" style="left:62px;top:1349px;height:22px;line-height:22px;font-size:12.5px;color:#b6b5b9">Filter</div><svg class="a" style="left:341.5px;top:1353px" width="14" height="14" viewBox="0 0 14 14"><circle cx="7" cy="7" r="6" fill="none" stroke="#d0cfd3" stroke-width="1"/><path d="M7 3.5V7H4.5" fill="none" stroke="#d0cfd3" stroke-width="1"/></svg><svg class="a" style="left:358.5px;top:1353px" width="14" height="14" viewBox="0 0 14 14"><rect x="0.7" y="0.7" width="12.6" height="12.6" rx="1" fill="none" stroke="#d0cfd3" stroke-width="1"/><path d="M2.8 7H6.2M4.5 5.3V8.7M8 7H11.2" stroke="#d0cfd3" stroke-width="1"/></svg><div class="a" style="left:384px;top:0;width:2176px;height:38px;background:#38363b"></div><div class="a" style="left:384px;top:38px;width:2176px;height:1px;background:#09090b"></div><svg class="a" style="left:393px;top:11px" width="16" height="17" viewBox="0 0 16 17"><circle cx="2.5" cy="2.5" r="1.6" fill="#b3b2b6"/><circle cx="12.8" cy="3" r="1.6" fill="#b3b2b6"/><circle cx="2.5" cy="14" r="1.6" fill="#b3b2b6"/><path d="M2.5 2.5V14M2.5 9.5Q2.5 7.5 6 7.2L10 6.8Q12.8 6.5 12.8 3" fill="none" stroke="#b3b2b6" stroke-width="1.1"/></svg><div class="a" style="left:416px;top:4px;font-size:13.2px;font-weight:bold;color:#ebebed;line-height:16px">AccessySwiftSDK</div><div class="a" style="left:416px;top:17.5px;font-size:11.6px;color:#bdbcc0;line-height:14px">development</div><div class="a" style="left:965px;top:8px;width:1016px;height:22px;border-radius:6px;background:#454347"></div><div class="a" style="left:1819px;top:8px;height:22px;line-height:22px;font-size:11.4px;color:#e6e6e8;-webkit-text-stroke:0.25px">Resolving Package Graph</div><svg class="a" style="left:1958px;top:11px" width="16" height="16" viewBox="0 0 16 16"><circle cx="8" cy="8" r="6.7" fill="none" stroke="#767579" stroke-width="1.5"/><path d="M8 1.3A6.7 6.7 0 1 1 4.65 13.8" fill="none" stroke="#1a84ff" stroke-width="1.6"/></svg><svg class="a" style="left:2486px;top:12px" width="14" height="14" viewBox="0 0 14 14"><path d="M7 1V13M1 7H13" stroke="#c0bfc3" stroke-width="1.2"/></svg><svg class="a" style="left:2527px;top:11px" width="20" height="16" viewBox="0 0 20 16"><rect x="1.6" y="1.6" width="16.8" height="12.8" rx="2.2" fill="none" stroke="#c4c3c7" stroke-width="1.2"/><line x1="12.7" y1="1.6" x2="12.7" y2="14.4" stroke="#c4c3c7" stroke-width="1.2"/><path d="M14.4 4.3H16.6M14.4 6.3H16.6M14.4 8.3H16.6" stroke="#c4c3c7" stroke-width="1"/></svg><div class="a" style="left:384px;top:39px;width:2176px;height:27px;background:#262327"></div><div class="a" style="left:384px;top:66px;width:2176px;height:1px;background:#3b393d"></div><svg class="a" style="left:392.5px;top:45.5px" width="14" height="14" viewBox="0 0 14 14"><g fill="none" stroke="#acabaf" stroke-width="1.05"><rect x="0.8" y="0.8" width="5.3" height="5.3"/><rect x="7.6" y="0.8" width="5.3" height="5.3"/><rect x="0.8" y="7.6" width="5.3" height="5.3"/><rect x="7.6" y="7.6" width="5.3" height="5.3"/></g></svg><div class="a" style="left:415px;top:46px;width:1px;height:12px;background:#464448"></div><svg class="a" style="left:424px;top:46px" width="8" height="13" viewBox="0 0 8 13"><path d="M6.8 1L1.2 6.5L6.8 12" fill="none" stroke="#b3b2b6" stroke-width="1.1"/></svg><svg class="a" style="left:443px;top:46px" width="8" height="13" viewBox="0 0 8 13"><path d="M1.2 1L6.8 6.5L1.2 12" fill="none" stroke="#6e6d71" stroke-width="1.1"/></svg><div class="a" style="left:461px;top:39px;width:2007px;height:27px;overflow:hidden"><div class="a" style="left:116px;top:0;width:133px;height:27px;background:#335577"></div><svg class="a" style="left:2px;top:9.5px" width="11" height="10" viewBox="0 0 13.5 12.8"><path fill="#f7963b" d="M8.2 0.3C10.5 1.8 12.2 4.2 12.3 7.2C12.4 8.5 12.3 9.6 12.6 10.5L13.3 11.8C12.5 11.9 11.8 12.2 11 12.3L7.5 12.4C4.5 12.3 2 10.8 0.2 8.6C2 9.3 4.5 9.4 6.8 8.7L1.2 3.6L1.7 2.4L8.6 6.6C9.2 4.8 9 2.5 8.2 0.3Z"/></svg><div class="a" style="left:18px;top:0;height:27px;line-height:27px;font-size:11.55px;color:#e6e6e8;padding-top:1px;-webkit-text-stroke:0.25px;white-space:nowrap">CreateRequest</div><svg class="a" style="left:140px;top:9.5px" width="11" height="10" viewBox="0 0 13.5 12.8"><path fill="#f7963b" d="M8.2 0.3C10.5 1.8 12.2 4.2 12.3 7.2C12.4 8.5 12.3 9.6 12.6 10.5L13.3 11.8C12.5 11.9 11.8 12.2 11 12.3L7.5 12.4C4.5 12.3 2 10.8 0.2 8.6C2 9.3 4.5 9.4 6.8 8.7L1.2 3.6L1.7 2.4L8.6 6.6C9.2 4.8 9 2.5 8.2 0.3Z"/></svg><div class="a" style="left:157.5px;top:0;height:27px;line-height:27px;font-size:11.55px;color:#e6e6e8;padding-top:1px;-webkit-text-stroke:0.25px;white-space:nowrap">Infrastructure</div><svg class="a" style="left:272.5px;top:9.5px" width="11" height="10" viewBox="0 0 13.5 12.8"><path fill="#f7963b" d="M8.2 0.3C10.5 1.8 12.2 4.2 12.3 7.2C12.4 8.5 12.3 9.6 12.6 10.5L13.3 11.8C12.5 11.9 11.8 12.2 11 12.3L7.5 12.4C4.5 12.3 2 10.8 0.2 8.6C2 9.3 4.5 9.4 6.8 8.7L1.2 3.6L1.7 2.4L8.6 6.6C9.2 4.8 9 2.5 8.2 0.3Z"/></svg><div class="a" style="left:290.29999999999995px;top:0;height:27px;line-height:27px;font-size:11.55px;color:#e6e6e8;padding-top:1px;-webkit-text-stroke:0.25px;white-space:nowrap">Infrastructu…odifications</div><div class="a" style="left:443.5px;top:8px;width:1px;height:11.5px;background:#403e42"></div><svg class="a" style="left:468px;top:9.5px" width="11" height="10" viewBox="0 0 13.5 12.8"><path fill="#f7963b" d="M8.2 0.3C10.5 1.8 12.2 4.2 12.3 7.2C12.4 8.5 12.3 9.6 12.6 10.5L13.3 11.8C12.5 11.9 11.8 12.2 11 12.3L7.5 12.4C4.5 12.3 2 10.8 0.2 8.6C2 9.3 4.5 9.4 6.8 8.7L1.2 3.6L1.7 2.4L8.6 6.6C9.2 4.8 9 2.5 8.2 0.3Z"/></svg><div class="a" style="left:486px;top:0;height:27px;line-height:27px;font-size:11.55px;color:#e6e6e8;padding-top:1px;-webkit-text-stroke:0.25px;white-space:nowrap">IntersectionNode</div><div class="a" style="left:595.9000000000001px;top:8px;width:1px;height:11.5px;background:#403e42"></div><svg class="a" style="left:621px;top:9.5px" width="11" height="10" viewBox="0 0 13.5 12.8"><path fill="#f7963b" d="M8.2 0.3C10.5 1.8 12.2 4.2 12.3 7.2C12.4 8.5 12.3 9.6 12.6 10.5L13.3 11.8C12.5 11.9 11.8 12.2 11 12.3L7.5 12.4C4.5 12.3 2 10.8 0.2 8.6C2 9.3 4.5 9.4 6.8 8.7L1.2 3.6L1.7 2.4L8.6 6.6C9.2 4.8 9 2.5 8.2 0.3Z"/></svg><div class="a" style="left:638px;top:0;height:27px;line-height:27px;font-size:11.55px;color:#e6e6e8;padding-top:1px;-webkit-text-stroke:0.25px;white-space:nowrap">Staircase</div><div class="a" style="left:706.0999999999999px;top:8px;width:1px;height:11.5px;background:#403e42"></div><svg class="a" style="left:731.4000000000001px;top:9.5px" width="11" height="10" viewBox="0 0 13.5 12.8"><path fill="#f7963b" d="M8.2 0.3C10.5 1.8 12.2 4.2 12.3 7.2C12.4 8.5 12.3 9.6 12.6 10.5L13.3 11.8C12.5 11.9 11.8 12.2 11 12.3L7.5 12.4C4.5 12.3 2 10.8 0.2 8.6C2 9.3 4.5 9.4 6.8 8.7L1.2 3.6L1.7 2.4L8.6 6.6C9.2 4.8 9 2.5 8.2 0.3Z"/></svg><div class="a" style="left:748px;top:0;height:27px;line-height:27px;font-size:11.55px;color:#e6e6e8;padding-top:1px;-webkit-text-stroke:0.25px;white-space:nowrap">PedestrianCrossing</div><div class="a" style="left:870.0999999999999px;top:8px;width:1px;height:11.5px;background:#403e42"></div><svg class="a" style="left:895.4000000000001px;top:9.5px" width="11" height="10" viewBox="0 0 13.5 12.8"><path fill="#f7963b" d="M8.2 0.3C10.5 1.8 12.2 4.2 12.3 7.2C12.4 8.5 12.3 9.6 12.6 10.5L13.3 11.8C12.5 11.9 11.8 12.2 11 12.3L7.5 12.4C4.5 12.3 2 10.8 0.2 8.6C2 9.3 4.5 9.4 6.8 8.7L1.2 3.6L1.7 2.4L8.6 6.6C9.2 4.8 9 2.5 8.2 0.3Z"/></svg><div class="a" style="left:912.5px;top:0;height:27px;line-height:27px;font-size:11.55px;color:#e6e6e8;padding-top:1px;-webkit-text-stroke:0.25px;white-space:nowrap">ZebraCrossing</div><div class="a" style="left:1007.3px;top:8px;width:1px;height:11.5px;background:#403e42"></div><svg class="a" style="left:1032.7px;top:9.5px" width="11" height="10" viewBox="0 0 13.5 12.8"><path fill="#f7963b" d="M8.2 0.3C10.5 1.8 12.2 4.2 12.3 7.2C12.4 8.5 12.3 9.6 12.6 10.5L13.3 11.8C12.5 11.9 11.8 12.2 11 12.3L7.5 12.4C4.5 12.3 2 10.8 0.2 8.6C2 9.3 4.5 9.4 6.8 8.7L1.2 3.6L1.7 2.4L8.6 6.6C9.2 4.8 9 2.5 8.2 0.3Z"/></svg><div class="a" style="left:1050.7px;top:0;height:27px;line-height:27px;font-size:11.55px;color:#e6e6e8;padding-top:1px;-webkit-text-stroke:0.25px;white-space:nowrap">TrafficIsland</div><div class="a" style="left:1133.5px;top:8px;width:1px;height:11.5px;background:#403e42"></div><svg class="a" style="left:1158.5px;top:9.5px" width="11" height="10" viewBox="0 0 13.5 12.8"><path fill="#f7963b" d="M8.2 0.3C10.5 1.8 12.2 4.2 12.3 7.2C12.4 8.5 12.3 9.6 12.6 10.5L13.3 11.8C12.5 11.9 11.8 12.2 11 12.3L7.5 12.4C4.5 12.3 2 10.8 0.2 8.6C2 9.3 4.5 9.4 6.8 8.7L1.2 3.6L1.7 2.4L8.6 6.6C9.2 4.8 9 2.5 8.2 0.3Z"/></svg><div class="a" style="left:1176.5px;top:0;height:27px;line-height:27px;font-size:11.55px;color:#e6e6e8;padding-top:1px;-webkit-text-stroke:0.25px;white-space:nowrap">TrafficLight</div><div class="a" style="left:1255.8px;top:8px;width:1px;height:11.5px;background:#403e42"></div><svg class="a" style="left:1280.8px;top:9.5px" width="11" height="10" viewBox="0 0 13.5 12.8"><path fill="#f7963b" d="M8.2 0.3C10.5 1.8 12.2 4.2 12.3 7.2C12.4 8.5 12.3 9.6 12.6 10.5L13.3 11.8C12.5 11.9 11.8 12.2 11 12.3L7.5 12.4C4.5 12.3 2 10.8 0.2 8.6C2 9.3 4.5 9.4 6.8 8.7L1.2 3.6L1.7 2.4L8.6 6.6C9.2 4.8 9 2.5 8.2 0.3Z"/></svg><div class="a" style="left:1298.3px;top:0;height:27px;line-height:27px;font-size:11.55px;color:#e6e6e8;padding-top:1px;-webkit-text-stroke:0.25px;white-space:nowrap">Path</div><div class="a" style="left:1340.9px;top:8px;width:1px;height:11.5px;background:#403e42"></div><svg class="a" style="left:1365.9px;top:9.5px" width="11" height="10" viewBox="0 0 13.5 12.8"><path fill="#f7963b" d="M8.2 0.3C10.5 1.8 12.2 4.2 12.3 7.2C12.4 8.5 12.3 9.6 12.6 10.5L13.3 11.8C12.5 11.9 11.8 12.2 11 12.3L7.5 12.4C4.5 12.3 2 10.8 0.2 8.6C2 9.3 4.5 9.4 6.8 8.7L1.2 3.6L1.7 2.4L8.6 6.6C9.2 4.8 9 2.5 8.2 0.3Z"/></svg><div class="a" style="left:1383.3px;top:0;height:27px;line-height:27px;font-size:11.55px;color:#e6e6e8;padding-top:1px;-webkit-text-stroke:0.25px;white-space:nowrap">PedestrianZone</div><div class="a" style="left:1484.9px;top:8px;width:1px;height:11.5px;background:#403e42"></div><svg class="a" style="left:1510.3px;top:9.5px" width="11" height="10" viewBox="0 0 13.5 12.8"><path fill="#f7963b" d="M8.2 0.3C10.5 1.8 12.2 4.2 12.3 7.2C12.4 8.5 12.3 9.6 12.6 10.5L13.3 11.8C12.5 11.9 11.8 12.2 11 12.3L7.5 12.4C4.5 12.3 2 10.8 0.2 8.6C2 9.3 4.5 9.4 6.8 8.7L1.2 3.6L1.7 2.4L8.6 6.6C9.2 4.8 9 2.5 8.2 0.3Z"/></svg><div class="a" style="left:1527.3px;top:0;height:27px;line-height:27px;font-size:11.55px;color:#e6e6e8;padding-top:1px;-webkit-text-stroke:0.25px;white-space:nowrap">Sidewalk</div><div class="a" style="left:1592.9px;top:8px;width:1px;height:11.5px;background:#403e42"></div><svg class="a" style="left:1617.4px;top:9.5px" width="11" height="10" viewBox="0 0 13.5 12.8"><path fill="#f7963b" d="M8.2 0.3C10.5 1.8 12.2 4.2 12.3 7.2C12.4 8.5 12.3 9.6 12.6 10.5L13.3 11.8C12.5 11.9 11.8 12.2 11 12.3L7.5 12.4C4.5 12.3 2 10.8 0.2 8.6C2 9.3 4.5 9.4 6.8 8.7L1.2 3.6L1.7 2.4L8.6 6.6C9.2 4.8 9 2.5 8.2 0.3Z"/></svg><div class="a" style="left:1634.9px;top:0;height:27px;line-height:27px;font-size:11.55px;color:#e6e6e8;padding-top:1px;-webkit-text-stroke:0.25px;white-space:nowrap">Coordinate</div><div class="a" style="left:1711.6999999999998px;top:8px;width:1px;height:11.5px;background:#403e42"></div><svg class="a" style="left:1736.9px;top:9.5px" width="11" height="10" viewBox="0 0 13.5 12.8"><path fill="#f7963b" d="M8.2 0.3C10.5 1.8 12.2 4.2 12.3 7.2C12.4 8.5 12.3 9.6 12.6 10.5L13.3 11.8C12.5 11.9 11.8 12.2 11 12.3L7.5 12.4C4.5 12.3 2 10.8 0.2 8.6C2 9.3 4.5 9.4 6.8 8.7L1.2 3.6L1.7 2.4L8.6 6.6C9.2 4.8 9 2.5 8.2 0.3Z"/></svg><div class="a" style="left:1754.3000000000002px;top:0;height:27px;line-height:27px;font-size:11.55px;color:#e6e6e8;padding-top:1px;-webkit-text-stroke:0.25px;white-space:nowrap">RepresentableProtocols</div><div class="a" style="left:1899.0px;top:8px;width:1px;height:11.5px;background:#403e42"></div><svg class="a" style="left:1922.6999999999998px;top:9px" width="13" height="11" viewBox="0 0 13 12"><path fill="none" stroke="#a7bccf" stroke-width="1.1" d="M6.5 2.2C5 1.2 2.8 1 0.8 1.4V10.6C2.8 10.2 5 10.4 6.5 11.4C8 10.4 10.2 10.2 12.2 10.6V1.4C10.2 1 8 1.2 6.5 2.2ZM6.5 2.2V11.4"/></svg><div class="a" style="left:1941.4px;top:0;height:27px;line-height:27px;font-size:11.55px;color:#e6e6e8;padding-top:1px;-webkit-text-stroke:0.25px;white-space:nowrap">AccessySwiftSDK</div><div class="a" style="left:0;top:0;width:3px;height:27px;background:linear-gradient(90deg,#141215,rgba(20,18,21,0))"></div></div><div class="a" style="left:2467px;top:39px;width:3px;height:27px;background:#141215"></div><svg class="a" style="left:2477px;top:45px" width="14" height="15" viewBox="0 0 14 15"><path d="M1.5 4.5H12M9 1.5L12.3 4.5L9 7.5M12.5 10.5H2M5 7.5L1.7 10.5L5 13.5" fill="none" stroke="#b9b8bc" stroke-width="1"/></svg><svg class="a" style="left:2500px;top:45px" width="20" height="15" viewBox="0 0 20 15"><path d="M1 1H6M1 4.5H8M1 8H7M1 11.5H8M1 14H8" stroke="#b9b8bc" stroke-width="1"/><rect x="11" y="1" width="7.5" height="13" fill="none" stroke="#b9b8bc" stroke-width="1"/><rect x="13.5" y="3.5" width="2.5" height="8" fill="none" stroke="#b9b8bc" stroke-width="1"/></svg><div class="a" style="left:2528px;top:46px;width:1px;height:13px;background:#46444a"></div><svg class="a" style="left:2538px;top:45px" width="14" height="15" viewBox="0 0 14 15"><rect x="0.7" y="0.7" width="12.6" height="13.6" rx="2" fill="none" stroke="#b9b8bc" stroke-width="1"/><path d="M4.5 0.7V14.3M6.5 7.5H11.5M9 5V10" stroke="#b9b8bc" stroke-width="1"/></svg><div class="a" style="left:384px;top:67px;width:2176px;height:27px;background:#232024"></div><div class="a" style="left:384px;top:94px;width:2176px;height:1px;background:#3a383c"></div><svg class="a" style="left:393px;top:74.5px" width="12" height="12" viewBox="0 0 13 13"><path fill="#d9aa6c" d="M6.5 0.5L12.5 3.2V9.8L6.5 12.5L0.5 9.8V3.2Z"/><path fill="#b98848" d="M6.5 6L12.5 3.2V9.8L6.5 12.5Z"/><path fill="#e8c08a" d="M6.5 0.5L12.5 3.2L6.5 6L0.5 3.2Z"/><path stroke="#8d6634" stroke-width="0.8" fill="none" d="M3.5 1.9L9.5 4.6V7M6.5 6V12.5"/></svg><div class="bc" style="left:411.3px">AccessySwiftSDK</div><svg class="a" style="left:506.5px;top:73px" width="7" height="15" viewBox="0 0 7 15"><path d="M1 1L5.5 7.5L1 14" fill="none" stroke="#8f8d92" stroke-width="1"/></svg><svg class="a" style="left:517px;top:75px" width="13" height="11" viewBox="0 0 14 12"><path fill="#62bcec" d="M1.5 0.5H5.2L6.6 2H12.5Q13.5 2 13.5 3V10.5Q13.5 11.5 12.5 11.5H1.5Q0.5 11.5 0.5 10.5V1.5Q0.5 0.5 1.5 0.5Z"/><rect x="0.5" y="3.2" width="13" height="0.9" fill="#434145" opacity="0.55"/></svg><div class="bc" style="left:536px">Sources</div><svg class="a" style="left:581.2px;top:73px" width="7" height="15" viewBox="0 0 7 15"><path d="M1 1L5.5 7.5L1 14" fill="none" stroke="#8f8d92" stroke-width="1"/></svg><svg class="a" style="left:592px;top:75px" width="13" height="11" viewBox="0 0 14 12"><path fill="#62bcec" d="M1.5 0.5H5.2L6.6 2H12.5Q13.5 2 13.5 3V10.5Q13.5 11.5 12.5 11.5H1.5Q0.5 11.5 0.5 10.5V1.5Q0.5 0.5 1.5 0.5Z"/><rect x="0.5" y="3.2" width="13" height="0.9" fill="#434145" opacity="0.55"/></svg><div class="bc" style="left:611px">AccessySwiftSDK</div><svg class="a" style="left:706.8px;top:73px" width="7" height="15" viewBox="0 0 7 15"><path d="M1 1L5.5 7.5L1 14" fill="none" stroke="#8f8d92" stroke-width="1"/></svg><svg class="a" style="left:717px;top:75px" width="13" height="11" viewBox="0 0 14 12"><path fill="#62bcec" d="M1.5 0.5H5.2L6.6 2H12.5Q13.5 2 13.5 3V10.5Q13.5 11.5 12.5 11.5H1.5Q0.5 11.5 0.5 10.5V1.5Q0.5 0.5 1.5 0.5Z"/><rect x="0.5" y="3.2" width="13" height="0.9" fill="#434145" opacity="0.55"/></svg><div class="bc" style="left:736.2px">Models</div><svg class="a" style="left:776.7px;top:73px" width="7" height="15" viewBox="0 0 7 15"><path d="M1 1L5.5 7.5L1 14" fill="none" stroke="#8f8d92" stroke-width="1"/></svg><svg class="a" style="left:788px;top:75.5px" width="13" height="11" viewBox="0 0 13.5 12.8"><path fill="#f7963b" d="M8.2 0.3C10.5 1.8 12.2 4.2 12.3 7.2C12.4 8.5 12.3 9.6 12.6 10.5L13.3 11.8C12.5 11.9 11.8 12.2 11 12.3L7.5 12.4C4.5 12.3 2 10.8 0.2 8.6C2 9.3 4.5 9.4 6.8 8.7L1.2 3.6L1.7 2.4L8.6 6.6C9.2 4.8 9 2.5 8.2 0.3Z"/></svg><div class="bc" style="left:806px">Infrastructure</div><svg class="a" style="left:880.3px;top:73px" width="7" height="15" viewBox="0 0 7 15"><path d="M1 1L5.5 7.5L1 14" fill="none" stroke="#8f8d92" stroke-width="1"/></svg><div class="a" style="left:890.6px;top:74px;width:14px;height:14px;border-radius:3px;background:#4a2f66;border:1px solid #a46ee0;color:#f0e6ff;font-size:10.5px;line-height:12px;text-align:center;font-weight:bold">S</div><div class="bc" style="left:910px">Infrastructure</div><div class="a" style="left:384px;top:95px;width:2143px;height:1251px;background:#1f1f24"></div><div class="a" style="left:2527px;top:95px;width:33px;height:1251px;background:#38373c"></div><div class="a" style="left:2527px;top:95px;width:1px;height:1251px;background:#4a494e"></div><div class="a" style="left:384px;top:95px;width:2143px;height:1251px;overflow:hidden"><div class="a" style="left:0;top:622.0px;width:2143px;height:23px;background:#434250"></div><div class="ln " style="top:1.5px">1</div><div class="cl" style="top:1.5px"><span class="cm">//</span></div><div class="ln " style="top:24.5px">2</div><div class="cl" style="top:24.5px"><span class="cm">//  File.swift</span></div><div class="ln " style="top:47.5px">3</div><div class="cl" style="top:47.5px"><span class="cm">//</span></div><div class="ln " style="top:70.5px">4</div><div class="cl" style="top:70.5px"><span class="cm">//</span></div><div class="ln " style="top:93.5px">5</div><div class="cl" style="top:93.5px"><span class="cm">//  Created by Michael Helmbrecht on 12.07.21.</span></div><div class="ln " style="top:116.5px">6</div><div class="cl" style="top:116.5px"><span class="cm">//</span></div><div class="ln " style="top:139.5px">7</div><div class="cl" style="top:139.5px"></div><div class="ln " style="top:162.5px">8</div><div class="cl" style="top:162.5px"><span class="k">import</span><span class="p"> Foundation</span></div><div class="ln " style="top:185.5px">9</div><div class="cl" style="top:185.5px"></div><div class="ln " style="top:208.5px">10</div><div class="cl" style="top:208.5px"></div><div class="ln " style="top:231.5px">11</div><div class="cl" style="top:231.5px"><span class="ds">///</span><span class="dx">Collection of infrastructure types.</span></div><div class="ln " style="top:254.5px">12</div><div class="cl" style="top:254.5px"><span class="ds">///</span></div><div class="ln " style="top:277.5px">13</div><div class="cl" style="top:277.5px"><span class="ds">///</span><span class="dx">Different infrastructure types are:</span></div><div class="ln " style="top:300.5px">14</div><div class="cl" style="top:300.5px"><span class="ds">///</span><span class="dx" style="display:inline-block;width:20.4px">–</span><span class="bt">``</span><span class="dc">Sidewalk</span><span class="bt">``</span><span class="dx"> (Standard sidewalk next to a road or basically in city context. For parks etc. choose </span><span class="bt">``</span><span class="dc">Path</span><span class="bt">``</span><span class="dx"> )</span></div><div class="ln " style="top:323.5px">15</div><div class="cl" style="top:323.5px"><span class="ds">///</span><span class="dx" style="display:inline-block;width:20.4px">–</span><span class="bt">``</span><span class="dc">PedestrianZone</span><span class="bt">``</span></div><div class="ln " style="top:346.5px">16</div><div class="cl" style="top:346.5px"><span class="ds">///</span><span class="dx" style="display:inline-block;width:20.4px">–</span><span class="bt">``</span><span class="dc">Path</span><span class="bt">``</span><span class="dx"> (A path like in parks, forests, nature etc.)</span></div><div class="ln " style="top:369.5px">17</div><div class="cl" style="top:369.5px"><span class="ds">///</span><span class="dx" style="display:inline-block;width:20.4px">–</span><span class="bt">``</span><span class="dc">TrafficLight</span><span class="bt">``</span></div><div class="ln " style="top:392.5px">18</div><div class="cl" style="top:392.5px"><span class="ds">///</span><span class="dx" style="display:inline-block;width:20.4px">–</span><span class="bt">``</span><span class="dc">TrafficIsland</span><span class="bt">``</span></div><div class="ln " style="top:415.5px">19</div><div class="cl" style="top:415.5px"><span class="ds">///</span><span class="dx" style="display:inline-block;width:20.4px">–</span><span class="bt">``</span><span class="dc">ZebraCrossing</span><span class="bt">``</span></div><div class="ln " style="top:438.5px">20</div><div class="cl" style="top:438.5px"><span class="ds">///</span><span class="dx" style="display:inline-block;width:20.4px">–</span><span class="bt">``</span><span class="dc">PedestrianCrossing</span><span class="bt">``</span></div><div class="ln " style="top:461.5px">21</div><div class="cl" style="top:461.5px"><span class="ds">///</span></div><div class="ln " style="top:484.5px">22</div><div class="cl" style="top:484.5px"><span class="ds">///</span><span class="dx">Other:</span></div><div class="ln " style="top:507.5px">23</div><div class="cl" style="top:507.5px"><span class="ds">///</span><span class="dx" style="display:inline-block;width:20.4px">–</span><span class="bt">``</span><span class="dc">IntersectionNode</span><span class="bt">``</span><span class="dx"> (Is used to connect different infrastructure types)</span></div><div class="ln " style="top:530.5px">24</div><div class="cl" style="top:530.5px"><span class="ds">///</span></div><div class="ln " style="top:553.5px">25</div><div class="cl" style="top:553.5px"><span class="k">public</span><span class="p"> </span><span class="k">struct</span><span class="p"> </span><span class="dt">Infrastructure</span><span class="p">: Codable, Hashable, Equatable {</span></div><div class="ln " style="top:576.5px">26</div><div class="cl" style="top:576.5px"><span class="p">  </span><span class="k">public</span><span class="p"> </span><span class="k">let</span><span class="p"> </span><span class="do">sidewalks</span><span class="p">: [</span><span class="pt">Sidewalk</span><span class="p">]</span></div><div class="ln " style="top:599.5px">27</div><div class="cl" style="top:599.5px"><span class="p">  </span><span class="k">public</span><span class="p"> </span><span class="k">let</span><span class="p"> </span><span class="do">pedestrianZones</span><span class="p">: [</span><span class="pt">PedestrianZone</span><span class="p">]</span></div><div class="ln lnc" style="top:622.5px">28</div><div class="cl" style="top:622.5px"><span class="p">  </span><span class="k">public</span><span class="p"> </span><span class="k">let</span><span class="p"> </span><span class="do">paths</span><span class="p">: [</span><span class="pt">Path</span><span class="p">]</span></div><div class="ln " style="top:645.5px">29</div><div class="cl" style="top:645.5px"><span class="p">  </span><span class="k">public</span><span class="p"> </span><span class="k">let</span><span class="p"> </span><span class="do">trafficLights</span><span class="p">: [</span><span class="pt">TrafficLight</span><span class="p">]</span></div><div class="ln " style="top:668.5px">30</div><div class="cl" style="top:668.5px"><span class="p">  </span><span class="k">public</span><span class="p"> </span><span class="k">let</span><span class="p"> </span><span class="do">trafficIsland</span><span class="p">: [</span><span class="pt">TrafficIsland</span><span class="p">]</span></div><div class="ln " style="top:691.5px">31</div><div class="cl" style="top:691.5px"><span class="p">  </span><span class="k">public</span><span class="p"> </span><span class="k">let</span><span class="p"> </span><span class="do">zebraCrossing</span><span class="p">: [</span><span class="pt">ZebraCrossing</span><span class="p">]</span></div><div class="ln " style="top:714.5px">32</div><div class="cl" style="top:714.5px"><span class="p">  </span><span class="k">public</span><span class="p"> </span><span class="k">let</span><span class="p"> </span><span class="do">pedestrianCrossing</span><span class="p">: [</span><span class="pt">PedestrianCrossing</span><span class="p">]</span></div><div class="ln " style="top:737.5px">33</div><div class="cl" style="top:737.5px"><span class="p">  </span><span class="k">public</span><span class="p"> </span><span class="k">let</span><span class="p"> </span><span class="do">staircases</span><span class="p">: [</span><span class="pt">Staircase</span><span class="p">]</span></div><div class="ln " style="top:760.5px">34</div><div class="cl" style="top:760.5px"><span class="p">  </span><span class="k">public</span><span class="p"> </span><span class="k">let</span><span class="p"> </span><span class="do">intersectionNodes</span><span class="p">: [</span><span class="p">IntersectionNode</span><span class="p">]</span></div><div class="ln " style="top:783.5px">35</div><div class="cl" style="top:783.5px"></div><div class="ln " style="top:806.5px">36</div><div class="cl" style="top:806.5px"><span class="p">  </span><span class="ds">///</span></div><div class="ln " style="top:829.5px">37</div><div class="cl" style="top:829.5px"><span class="p">  </span><span class="k">init</span><span class="p">(</span><span class="do">sidewalks</span><span class="p">: [</span><span class="pt">Sidewalk</span><span class="p">] = [],</span></div><div class="ln " style="top:852.5px">38</div><div class="cl" style="top:852.5px"><span class="p">       </span><span class="do">pedestrianZones</span><span class="p">: [</span><span class="pt">PedestrianZone</span><span class="p">] = [],</span></div><div class="ln " style="top:875.5px">39</div><div class="cl" style="top:875.5px"><span class="p">       </span><span class="do">paths</span><span class="p">: [</span><span class="pt">Path</span><span class="p">] = [],</span></div><div class="ln " style="top:898.5px">40</div><div class="cl" style="top:898.5px"><span class="p">       </span><span class="do">trafficLights</span><span class="p">: [</span><span class="pt">TrafficLight</span><span class="p">] = [],</span></div><div class="ln " style="top:921.5px">41</div><div class="cl" style="top:921.5px"><span class="p">       </span><span class="do">trafficIsland</span><span class="p">: [</span><span class="pt">TrafficIsland</span><span class="p">] = [],</span></div><div class="ln " style="top:944.5px">42</div><div class="cl" style="top:944.5px"><span class="p">       </span><span class="do">zebraCrossing</span><span class="p">: [</span><span class="pt">ZebraCrossing</span><span class="p">] = [],</span></div><div class="ln " style="top:967.5px">43</div><div class="cl" style="top:967.5px"><span class="p">       </span><span class="do">pedestrianCrossing</span><span class="p">: [</span><span class="pt">PedestrianCrossing</span><span class="p">] = [],</span></div><div class="ln " style="top:990.5px">44</div><div class="cl" style="top:990.5px"><span class="p">       </span><span class="do">staircases</span><span class="p">: [</span><span class="pt">Staircase</span><span class="p">] = [],</span></div><div class="ln " style="top:1013.5px">45</div><div class="cl" style="top:1013.5px"><span class="p">       </span><span class="do">intersectionNodes</span><span class="p">: [</span><span class="p">IntersectionNode</span><span class="p">] = []) {</span></div><div class="ln " style="top:1036.5px">46</div><div class="cl" style="top:1036.5px"><span class="p">    </span><span class="k">self</span><span class="p">.sidewalks = sidewalks</span></div><div class="ln " style="top:1059.5px">47</div><div class="cl" style="top:1059.5px"><span class="p">    </span><span class="k">self</span><span class="p">.pedestrianZones = pedestrianZones</span></div><div class="ln " style="top:1082.5px">48</div><div class="cl" style="top:1082.5px"><span class="p">    </span><span class="k">self</span><span class="p">.paths = paths</span></div><div class="ln " style="top:1105.5px">49</div><div class="cl" style="top:1105.5px"><span class="p">    </span><span class="k">self</span><span class="p">.trafficLights = trafficLights</span></div><div class="ln " style="top:1128.5px">50</div><div class="cl" style="top:1128.5px"><span class="p">    </span><span class="k">self</span><span class="p">.trafficIsland = trafficIsland</span></div><div class="ln " style="top:1151.5px">51</div><div class="cl" style="top:1151.5px"><span class="p">    </span><span class="k">self</span><span class="p">.zebraCrossing = zebraCrossing</span></div><div class="ln " style="top:1174.5px">52</div><div class="cl" style="top:1174.5px"><span class="p">    </span><span class="k">self</span><span class="p">.pedestrianCrossing = pedestrianCrossing</span></div><div class="ln " style="top:1197.5px">53</div><div class="cl" style="top:1197.5px"><span class="p">    </span><span class="k">self</span><span class="p">.staircases = staircases</span></div><div class="ln " style="top:1220.5px">54</div><div class="cl" style="top:1220.5px"><span class="p">    </span><span class="k">self</span><span class="p">.intersectionNodes = intersectionNodes</span></div><div class="ln " style="top:1243.5px">55</div><div class="cl" style="top:1243.5px"><span class="p">  }</span></div></div><div class="a" style="left:384px;top:1346px;width:2176px;height:1.3px;background:#0a0a0c"></div><div class="a" style="left:384px;top:1347px;width:2176px;height:27px;background:#262326"></div><svg class="a" style="left:395.5px;top:1355.5px" width="16" height="10" viewBox="0 0 16 10"><path d="M1.8 0.4H12.3L15.3 4.8L12.3 9.2H1.8Q0.4 9.2 0.4 7.8V1.8Q0.4 0.4 1.8 0.4Z" fill="#1a84ff"/></svg><div class="a" style="left:2428px;top:1347px;height:28px;line-height:28px;font-size:11.3px;color:#b9b8bc;font-weight:bold;white-space:pre">Line: 28  Col: 27</div><div class="a" style="left:2525.5px;top:1353px;width:1px;height:13px;background:#454347"></div><svg class="a" style="left:2535px;top:1353.5px" width="14" height="14" viewBox="0 0 14 14"><rect x="0.7" y="0.7" width="12.6" height="12.6" rx="2.2" fill="none" stroke="#b9b8bc" stroke-width="1"/><rect x="2.5" y="8" width="9" height="3" fill="#b9b8bc"/></svg></div><div id="winb"></div></body></html>
